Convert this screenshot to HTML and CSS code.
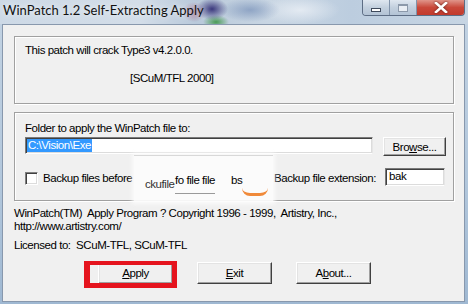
FILE: index.html
```html
<!DOCTYPE html>
<html>
  <head>
    <title>WinPatch 1.2 Self-Extracting Apply</title>
    <link rel="stylesheet" href="styles.css">
  </head>
  <body>
    <div class="window">
      <div class="titlebar">
        <span class="title">WinPatch 1.2 Self-Extracting Apply</span>
        <div class="caption-btns">
          <span class="cb min"><i></i></span>
          <span class="cb max"><i></i></span>
          <span class="cb close">
            <svg width="14" height="11" viewBox="0 0 14 11">
              <path d="M2 1 L12 10 M12 1 L2 10" stroke="#fff" stroke-width="2.6" stroke-linecap="square" />
            </svg>
          </span>
        </div>
      </div>

      <div class="client">
        <div class="group info">
          <div class="line">This patch will crack Type3 v4.2.0.0.</div>
          <div class="line sig">[SCuM/TFL 2000]</div>
        </div>

        <div class="group options">
          <div class="line">Folder to apply the WinPatch file to:</div>
          <div class="row">
            <div class="edit folder"><span class="sel">C:\Vision\Exe</span></div>
            <button class="btn browse">Bro<u>w</u>se...</button>
          </div>
          <div class="row backup">
            <span class="check"></span>
            <span class="line">Backup files before</span>
            <span class="line ext-label">Backup file extension:</span>
            <div class="edit ext">bak</div>
          </div>

          <!-- leftover of a tooltip caught in the shot -->
          <div class="ghost">
            <span class="g1">ckufile</span>
            <span class="g2">fo file file</span>
            <span class="g3">bs</span>
            <span class="swoosh"></span>
          </div>
        </div>

        <div class="about-text">
          <div class="line">WinPatch(TM)&nbsp; Apply Program ? Copyright 1996 - 1999,&nbsp; Artistry, Inc.,</div>
          <div class="line">http://www.artistry.com/</div>
          <div class="line licensed">Licensed to:&nbsp; SCuM-TFL, SCuM-TFL</div>
        </div>

        <div class="actions">
          <span class="marked">
            <button class="btn"><u>A</u>pply</button>
          </span>
          <button class="btn"><u>E</u>xit</button>
          <button class="btn">A<u>b</u>out...</button>
        </div>
      </div>
    </div>
  </body>
</html>
```

FILE: styles.css
```css
body {
  margin: 0;
  padding: 0;
  font-family: "Liberation Sans", Arial, sans-serif;
  font-size: 11.5px;
  letter-spacing: -0.45px;
  color: #000;
}

.window {
  width: 468px;
  height: 304px;
  box-sizing: border-box;
  padding: 0 3px 2px 2px;
  display: flex;
  flex-direction: column;
  background: linear-gradient(#c3d3e3, #b2c7dc 60%, #9fb8d2);
}

/* aero title bar */
.titlebar {
  height: 24px;
  flex: none;
  display: flex;
  align-items: flex-start;
  margin: 0 -3px 0 -2px;
  padding: 0 3px 0 3px;
  background:
    radial-gradient(ellipse 16px 11px at 212px 9px, rgba(52, 48, 120, 0.95), rgba(52, 48, 120, 0)),
    radial-gradient(ellipse 13px 7px at 216px 22px, rgba(60, 150, 70, 0.9), rgba(60, 150, 70, 0)),
    radial-gradient(ellipse 12px 10px at 194px 12px, rgba(150, 70, 110, 0.6), rgba(150, 70, 110, 0)),
    radial-gradient(ellipse 30px 12px at 250px 10px, rgba(120, 145, 185, 0.7), rgba(120, 145, 185, 0)),
    radial-gradient(ellipse 40px 14px at 300px 10px, rgba(235, 240, 246, 0.8), rgba(235, 240, 246, 0)),
    linear-gradient(90deg, #cdd9e6 0%, #d3dde8 30%, #b9c9da 42%, #c9d6e3 58%, #bccddf 75%, #c7d5e3 100%);
}

.title {
  font-family: Lato, "Open Sans", sans-serif;
  font-size: 13px;
  letter-spacing: 0;
  line-height: 20px;
  color: #111;
  text-shadow: 0 0 6px rgba(255, 255, 255, 0.9);
}

.caption-btns {
  margin-left: auto;
  display: flex;
  height: 15px;
  border: 1px solid #5d6d84;
  border-top: none;
  border-radius: 0 0 4px 4px;
  overflow: hidden;
}

.cb {
  display: flex;
  align-items: center;
  justify-content: center;
  height: 15px;
  width: 26px;
  background: linear-gradient(#dfe7f0, #c3d0de 50%, #b3c3d5);
  border-right: 1px solid #8193aa;
}

.cb i {
  display: block;
  box-sizing: border-box;
}

.min i {
  width: 10px;
  height: 4px;
  margin-top: 4px;
  background: #fff;
  border: 1px solid #3f4a5c;
}

.max i {
  width: 10px;
  height: 8px;
  border: 1px solid #8c99aa;
  border-top-width: 2px;
  background: #e9eef4;
}

.cb.close {
  width: 47px;
  border-right: none;
  background: linear-gradient(#e0958a, #c9483a 50%, #c23a2c);
}

.close svg {
  filter: drop-shadow(0 0 1px #5a1a12);
}

/* client area */
.client {
  flex: 1;
  background: #f0f0f0;
  border: 1px solid #8898ad;
}

.group {
  position: relative;
  box-sizing: border-box;
  width: 440px;
  margin-left: 11px;
  border: 1px solid #a0a0a0;
  box-shadow: inset 1px 1px #fff, 1px 1px #fff;
}

.line {
  line-height: 13px;
  white-space: nowrap;
}

.info {
  margin-top: 11px;
  height: 68px;
  padding: 7px 10px 0;
}

.info .sig {
  margin-top: 15px;
  padding-left: 105px;
}

.options {
  margin-top: 8px;
  height: 89px;
  padding: 9px 7px 0 10px;
}

.row {
  display: flex;
  align-items: flex-start;
  margin-top: 2px;
}

.edit {
  box-sizing: border-box;
  background: #fff;
  border-top: 1px solid #7a7a7a;
  border-left: 1px solid #7a7a7a;
  border-right: 1px solid #e6e6e6;
  border-bottom: 1px solid #fff;
  box-shadow: inset 1px 1px #404040, inset -1px -1px #dcdcdc;
  line-height: 13px;
}

.folder {
  width: 348px;
  height: 17px;
  padding: 1px 0 0 1px;
}

.sel {
  display: inline-block;
  background: #3399ff;
  color: #fff;
  padding: 0 1px;
}

.btn {
  box-sizing: border-box;
  width: 75px;
  height: 22px;
  padding: 0;
  font: inherit;
  letter-spacing: inherit;
  color: #000;
  background: #f0f0f0;
  border-top: 1px solid #fff;
  border-left: 1px solid #fff;
  border-right: 1px solid #404040;
  border-bottom: 1px solid #404040;
  box-shadow: inset -1px -1px #a0a0a0, inset 1px 1px #e3e3e3;
  border-radius: 0;
}

.browse {
  width: 63px;
  height: 19px;
  margin-left: 10px;
}

.backup {
  margin-top: 12px;
  align-items: center;
  height: 18px;
}

.check {
  box-sizing: border-box;
  width: 13px;
  height: 13px;
  margin: 2px 5px 0 0;
  background: #fff;
  border-top: 1px solid #808080;
  border-left: 1px solid #808080;
  border-right: 1px solid #fff;
  border-bottom: 1px solid #fff;
  box-shadow: inset 1px 1px #404040, inset -1px -1px #dcdcdc;
}

.backup .line {
  margin-top: 2px;
}

.ext-label {
  margin-left: auto;
  margin-right: 9px;
}

.ext {
  width: 60px;
  height: 18px;
  padding: 1px 0 0 3px;
  margin-right: 1px;
}

/* blurred leftover over the backup row */
.ghost {
  position: absolute;
  left: 119px;
  top: 42px;
  width: 139px;
  height: 46px;
  background: rgba(252, 252, 252, 0.93);
  box-shadow: 0 0 4px 2px rgba(252, 252, 252, 0.9);
  border-top: 1px solid #d8d8d8;
}

.ghost span {
  position: absolute;
  line-height: 13px;
  white-space: nowrap;
}

.g1 {
  left: 11px;
  top: 22px;
  color: #333;
}

.g2 {
  left: 41px;
  top: 18px;
  border-bottom: 1px solid #9a9a9a;
  padding-bottom: 6px;
}

.g3 {
  left: 97px;
  top: 18px;
}

.swoosh {
  left: 108px;
  top: 32px;
  width: 26px;
  height: 5px;
  border-bottom: 3px solid #f08a3a;
  border-radius: 0 0 14px 14px;
}

.about-text {
  padding: 6px 0 0 11px;
}

.licensed {
  margin-top: 6px;
}

.actions {
  display: flex;
  gap: 24px;
  margin: 10px 0 0 95px;
}

.marked {
  position: relative;
  display: flex;
}

.marked::after {
  content: "";
  position: absolute;
  left: -14px;
  top: -1px;
  width: 93px;
  height: 27px;
  box-sizing: border-box;
  border-style: solid;
  border-color: #e5141e;
  border-width: 4px 5px 5px 6px;
}
```
